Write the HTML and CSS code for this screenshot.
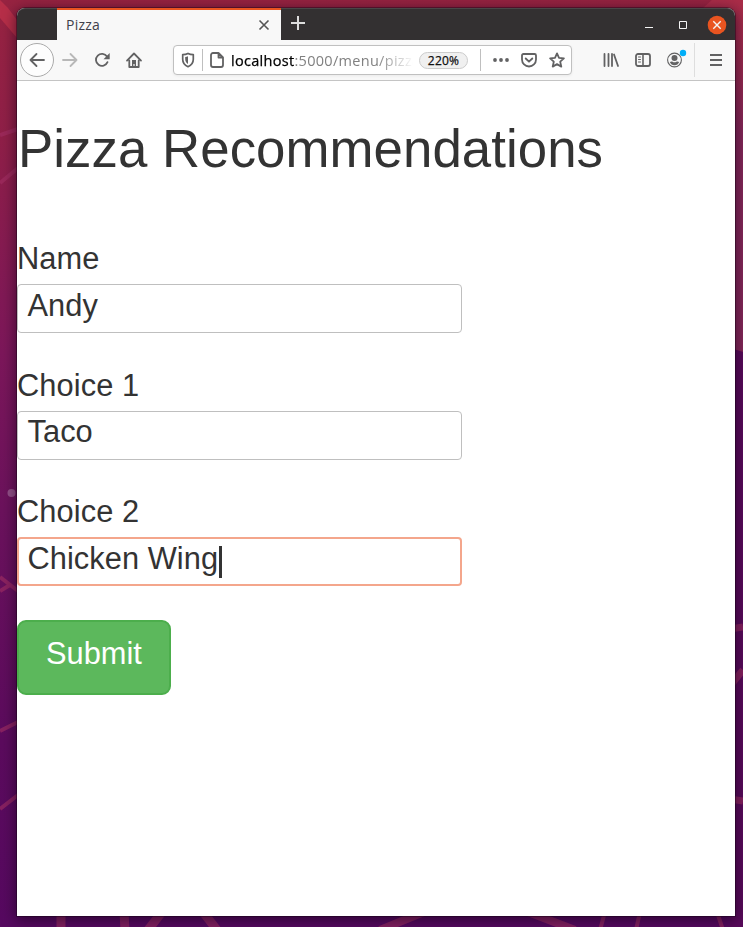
FILE: index.html
```html
<!DOCTYPE html>
<html lang="en">
<head>
<meta charset="utf-8">
<title>Pizza</title>
<link rel="stylesheet" href="styles.css">
</head>
<body>
<svg class="wallpaper" viewBox="0 0 743 927" aria-hidden="true">
  <defs>
    <linearGradient id="dusk" x1="0" y1="0" x2="0" y2="1">
      <stop offset="0" stop-color="#972341"/><stop offset=".15" stop-color="#8f1f48"/><stop offset=".38" stop-color="#7c175a"/><stop offset=".55" stop-color="#6b125c"/><stop offset=".8" stop-color="#5b0b5d"/><stop offset="1" stop-color="#560960"/>
    </linearGradient>
    <linearGradient id="right" x1="0" y1="0" x2="0" y2="1">
      <stop offset="0" stop-color="#aa2c48"/><stop offset=".2" stop-color="#98294f"/><stop offset=".38" stop-color="#852759"/>
    </linearGradient>
  </defs>
  <rect width="743" height="927" fill="url(#dusk)"/>
  <path d="M712 0H743V352L730 348V20L703 8Z" fill="url(#right)"/>
  <path d="M730 348L743 352V927H730Z" fill="#590a5b"/>
  <path d="M0 18L17 38V20L8 8L0 0Z" fill="#b62e48"/>
  <g fill="none" stroke="#a12f62" stroke-opacity=".62" stroke-width="4">
    <path d="M0 135L18 129M0 183L18 168M0 577L18 591M0 591L10 585M0 731L18 722M0 809L18 795"/>
    <path d="M730 629L743 627M730 686L743 670M730 799L743 801" stroke-width="7"/>
    <path d="M61 912V930M124 912L125 930M162 912L148 930M203 912L217 930" stroke-width="9"/>
    <path d="M424 912L380 930M528 912L575 930" stroke-width="8"/>
    <path d="M605 912L600 930M640 912L636 930M717 912L723 930"/>
  </g>
  <circle cx="11.500" cy="493" r="4" fill="#935088"/>
</svg>
<div class="window">
  <div class="tabs">
    <div class="tab">
      <span class="tab-title">Pizza</span>
      <svg class="tab-close" width="12" height="12" viewBox="0 0 12 12"><path d="M1.500 1.500l9 9m0-9l-9 9"/></svg>
    </div>
    <svg class="plus" width="16" height="16" viewBox="0 0 16 16"><path d="M8 1v14M1 8h14"/></svg>
    <div class="controls">
      <svg width="10" height="10" viewBox="0 0 10 10"><path d="M1 7.500h8"/></svg>
      <svg width="10" height="10" viewBox="0 0 10 10"><path d="M1.500 1.500h7v7h-7z"/></svg>
      <svg class="close" width="20" height="20" viewBox="0 0 20 20"><circle cx="10" cy="10" r="9.300"/><path d="M6.300 6.300l7.400 7.400m0-7.400l-7.400 7.400"/></svg>
    </div>
  </div>
  <div class="toolbar">
    <div class="back"><svg class="icon" viewBox="0 0 16 16"><path d="M15 8H1.500M7.500 2L1.500 8l6 6"/></svg></div>
    <svg class="icon forward" viewBox="0 0 16 16"><path d="M1 8h13.500M8.500 2l6 6-6 6"/></svg>
    <svg class="icon reload" viewBox="0 0 16 16"><path d="M13.500 10.200A6 6 0 1 1 13 4.600"/><path class="solid" d="M15.700 1v6.200H9.500z"/></svg>
    <svg class="icon home" viewBox="0 0 16 16"><path d="M1 8.600L8 1.500l7 7.100M3.300 8.500V15h9.400V8.500"/><path class="solid" d="M6 8h4v7H8.600v-3H7.400v3H6z"/></svg>
    <div class="address">
      <svg class="icon" viewBox="0 0 16 16"><path d="M8 1.400c1.700.9 3.500 1.200 5.300 1.200v4.600c0 3.500-1.800 6-5.300 7.500-3.500-1.500-5.300-4-5.300-7.500V2.600C4.500 2.600 6.300 2.300 8 1.400z" stroke-width="1.700"/><path class="solid" d="M8 4.300v7.700C6 10.700 5.200 9 5.200 7V5C6.200 4.900 7.200 4.700 8 4.300z"/></svg>
      <i class="rule"></i>
      <svg class="icon page" viewBox="0 0 16 16"><path d="M9.500 1H4a2 2 0 0 0-2 2v10a2 2 0 0 0 2 2h8a2 2 0 0 0 2-2V5.500zM9.500 1v4.500H14"/></svg>
      <span class="url"><b>localhost</b>:5000/menu/pizza</span>
      <span class="zoom">220%</span>
      <i class="rule"></i>
      <svg class="icon dots" viewBox="0 0 16 16"><g class="solid"><circle cx="2" cy="8" r="1.900"/><circle cx="8" cy="8" r="1.900"/><circle cx="14" cy="8" r="1.900"/></g></svg>
      <svg class="icon pocket" viewBox="0 0 16 16"><path d="M2.400 2h11.200c.8 0 1.400.6 1.400 1.400V7.500a7 7 0 0 1-14 0V3.400C1 2.600 1.600 2 2.400 2z"/><path d="M4.700 6.500L8 9.700l3.300-3.200"/></svg>
      <svg class="icon star" viewBox="0 0 16 16"><path d="M8 1.400l2 4.500 4.900.5-3.700 3.300 1.100 4.900L8 12.100l-4.300 2.500 1.100-4.900L1.100 6.400 6 5.900z"/></svg>
    </div>
    <svg class="icon library" viewBox="0 0 16 16"><path d="M1.500 2v12M5.500 2v12M9 2v12M11 2.500l4 11.500"/></svg>
    <svg class="icon sidebar" viewBox="0 0 16 16"><rect x="1" y="2" width="14" height="12" rx="2"/><path d="M8 2v12" stroke-width="1.600"/><path d="M3.500 5h2M3.500 7.500h2M3.500 10h2" stroke-width="1"/></svg>
    <svg class="icon account" viewBox="0 0 16 16"><circle cx="7.500" cy="8" r="6.900" stroke-width="1.100"/><g class="solid"><circle cx="7.500" cy="6" r="3"/><path d="M2.800 10c1.300-.7 2-.7 2.800-.3 1 .7 2.700.7 3.800 0 .8-.4 1.500-.4 2.800.3-.8 2-2.500 3.300-4.700 3.300S3.600 12 2.800 10z"/></g><circle class="badge" cx="16" cy="1" r="3.200"/></svg>
    <i class="rule tall"></i>
    <svg class="icon menu" viewBox="0 0 16 16"><path d="M2 3h12M2 8h12M2 13h12"/></svg>
  </div>
  <main>
    <h1>Pizza Recommendations</h1>
    <form>
      <label for="name">Name</label>
      <div class="field" id="name">Andy</div>
      <label for="choice1">Choice 1</label>
      <div class="field" id="choice1">Taco</div>
      <label for="choice2">Choice 2</label>
      <div class="field focused" id="choice2">Chicken Wing<i class="caret"></i></div>
      <button type="button">Submit</button>
    </form>
  </main>
</div>
</body>
</html>
```
FILE: styles.css
```css
* { box-sizing: border-box; }
body {
  margin: 0;
  height: 927px;
  padding: 8px 8px 11px 17px;
  overflow: hidden;
  font-family: "Liberation Sans", sans-serif;
  color: #333;
}
.wallpaper { position: absolute; left: 0; top: 0; width: 743px; height: 927px; z-index: -1; }
.window {
  height: 908px;
  background: #fff;
  border-radius: 8px 8px 0 0;
  box-shadow: 0 0 0 1px rgba(20,0,20,.4), 0 3px 14px 1px rgba(15,0,20,.6);
}
.tabs {
  display: flex;
  align-items: center;
  height: 32px;
  padding-left: 40px;
  background: #333031;
  border-radius: 8px 8px 0 0;
  border-top: 1px solid #494647;
}
.tab {
  display: flex;
  align-items: center;
  justify-content: space-between;
  width: 224px;
  height: 34px;
  padding: 0 11px 3px 9px;
  margin-top: 1px;
  background: #f8f8f8;
  border-top: 2px solid #e95420;
}
.tab-title { font: 14px/20px "Open Sans", sans-serif; letter-spacing: .25px; color: #40404a; }
.tabs svg { display: block; fill: none; stroke: #f4f4f4; }
.tabs .tab-close { stroke: #555; stroke-width: 1.6; }
.tabs .plus { margin: -3px 0 0 9px; stroke: #ddd; stroke-width: 2; }
.controls { display: flex; align-items: center; gap: 24px; margin: 0 8px 0 auto; }
.controls .close { margin-left: -5px; stroke-width: 1.4; }
.controls .close circle { fill: #e95420; stroke: none; }
.toolbar {
  position: relative;
  display: flex;
  align-items: center;
  height: 41px;
  padding: 0 11px 0 3px;
  background: #f8f8f8;
  border-bottom: 1px solid #c4c4c4;
}
.icon {
  display: block;
  flex: none;
  width: 16px;
  height: 16px;
  overflow: visible;
  fill: none;
  stroke: #626263;
  stroke-width: 1.8;
  stroke-linecap: round;
  stroke-linejoin: round;
}
.solid { fill: #626263; stroke: none; }
.back {
  display: flex;
  align-items: center;
  justify-content: center;
  width: 34px;
  height: 34px;
  border: 1px solid #aaa;
  border-radius: 50%;
  background: #fdfdfd;
}
.forward { margin-left: 8px; stroke: #b8b8b8; }
.reload, .home { margin-left: 16px; }
.address {
  display: flex;
  align-items: center;
  width: 399px;
  height: 30px;
  margin-left: 31px;
  padding-left: 6px;
  background: #fff;
  border: 1px solid #c0c0c0;
  border-radius: 4px;
  box-shadow: 0 1px 3px rgba(0,0,0,.06);
}
.rule { flex: none; width: 1px; height: 22px; margin-left: 6px; background: #bfbfbf; }
.page { margin-left: 6px; }
.url {
  width: 182px;
  margin-left: 6px;
  overflow: hidden;
  white-space: nowrap;
  font: 14.500px/22px "Open Sans", sans-serif;
  letter-spacing: .3px;
  color: #808080;
  padding-top: 1px;
  -webkit-mask-image: linear-gradient(90deg, #000 145px, transparent 183px);
  mask-image: linear-gradient(90deg, #000 145px, transparent 183px);
}
.url b { font-weight: 400; color: #000; -webkit-text-stroke: .25px #000; }
.zoom {
  width: 49px;
  height: 17px;
  margin-left: 6px;
  border: 1px solid #ccc;
  border-radius: 9px;
  background: #f0f0f0;
  color: #111;
  text-align: center;
  font: 12px/16px "Open Sans", sans-serif;
  letter-spacing: .2px;
  -webkit-text-stroke: .25px #111;
}
.zoom + .rule { margin-left: 12px; }
.dots, .pocket, .star { margin-left: 12px; }
.library { margin-left: 31px; }
.sidebar, .account { margin-left: 16px; }
.badge { fill: #00aef8; stroke: none; }
.tall { height: 34px; margin-left: 11px; background: #dedede; }
.menu { margin-left: 13px; stroke-linecap: butt; }
main { padding-top: 39px; }
h1 {
  margin: 0 0 58px 1px;
  font-weight: 400;
  font-size: 52.800px;
  line-height: 58px;
  letter-spacing: .05px;
  white-space: nowrap;
}
label { display: block; height: 48px; padding-top: 1px; font-size: 30.800px; line-height: 44px; letter-spacing: .1px; }
.field {
  display: flex;
  align-items: flex-start;
  width: 445px;
  height: 49px;
  margin-bottom: 30px;
  padding-left: 9.500px;
  border: 1px solid #bfbfbf;
  border-radius: 4px;
  font-size: 30.800px;
  line-height: 41px;
  letter-spacing: .05px;
}
#choice1 { margin-bottom: 29px; line-height: 39px; }
.focused { margin-bottom: 34px; padding-left: 8.500px; border: 2px solid #f4a68c; line-height: 39px; }
.caret { width: 3px; height: 32px; margin: 7px 0 0 .500px; background: #333; }
button {
  display: block;
  width: 154px;
  height: 75px;
  padding: 0 0 8px;
  border: 2px solid #4cae4c;
  border-radius: 9px;
  background: #5cb85c;
  color: #fff;
  font: 30.800px/44px "Liberation Sans", sans-serif;
}
```
